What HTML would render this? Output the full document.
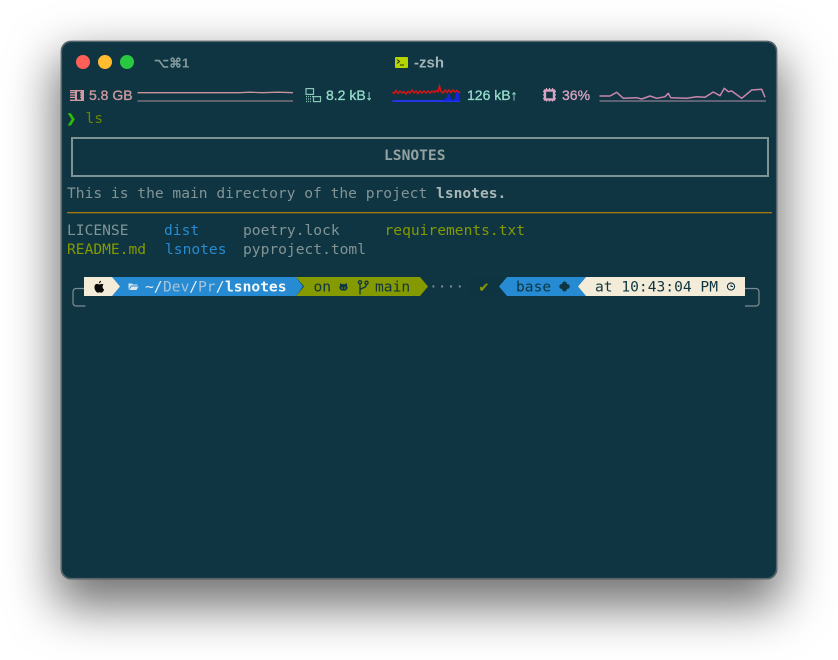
<!DOCTYPE html>
<html>
<head>
<meta charset="utf-8">
<style>
html,body{margin:0;padding:0;background:#fff;width:838px;height:660px;overflow:hidden}
#win{position:absolute;left:61px;top:41px;width:716px;height:538px;border-radius:10px;background:#0e3541;box-shadow:0 22px 48px 6px rgba(0,0,0,.55),0 0 0 .5px rgba(0,0,0,.4)}
svg{position:absolute;left:0;top:0}
.m{font-family:"DejaVu Sans Mono","Liberation Mono",monospace;font-size:14.6px;white-space:pre}
.s{font-family:"Liberation Sans",sans-serif;font-weight:700;font-size:14px}
.t{font-family:"Liberation Sans",sans-serif;font-size:14px;stroke-width:.3px}
</style>
</head>
<body>
<div id="win"></div>
<svg width="838" height="660" viewBox="0 0 838 660" xmlns="http://www.w3.org/2000/svg">
<rect x="61.5" y="41.5" width="715" height="537" rx="10" fill="none" stroke="#56666e" stroke-width="1.2"/>
<!-- traffic lights -->
<circle cx="83" cy="62" r="7" fill="#ff5f57"/>
<circle cx="105" cy="62" r="7" fill="#febc2e"/>
<circle cx="127" cy="62" r="7" fill="#28c840"/>
<text x="154" y="67.5" class="s" fill="#84999d" style="font-size:13px">⌥⌘1</text>
<!-- title -->
<rect x="395" y="57" width="13" height="11" rx="1" fill="#b7d300"/>
<path d="M397 59.5l2.5 2-2.5 2M400 65h4" stroke="#22330a" stroke-width="1" fill="none"/>
<text x="414" y="67.5" class="s" fill="#a2b2b5" style="font-size:15px">-zsh</text>

<!-- memory -->
<g fill="#d19a9f">
<rect x="75" y="90" width="2" height="11"/><rect x="81" y="90" width="3" height="11"/>
<rect x="70" y="90" width="14" height="1.4"/><rect x="70" y="99.6" width="14" height="1.4"/>
<path d="M70 92h5v1.200h-5zM70 94.400h5v1.200h-5zM70 96.800h5v1.200h-5zM80 92h4v1.200h-4zM80 94.400h4v1.200h-4zM80 96.800h4v1.200h-4z"/>
</g>
<text x="89" y="100" class="t" fill="#d19a9f" stroke="#d19a9f">5.8 GB</text>
<path d="M137.500 92.700H240L250 92.200L262 92.700L278 92.200L293 92.700" stroke="#c69499" stroke-width="1.300" fill="none"/>
<path d="M137.500 101H293" stroke="#8f7d85" stroke-width="1.300"/>

<!-- network -->
<g fill="none" stroke="#8ac6b8" stroke-width="1.200">
<rect x="306" y="88.600" width="7.500" height="5.800"/>
<rect x="313.500" y="96.600" width="7" height="5"/>
<path d="M306 96.500h7M306 99h6M306 101.500h6" stroke-dasharray="1 1"/>
</g>
<text x="326" y="100" class="t" fill="#97dccb" stroke="#97dccb">8.2 kB↓</text>
<path d="M392.500 101H460" stroke="#2336e8" stroke-width="2"/>
<path d="M442 101L444 100L447 98L449 94L451 100L453 101M453 101L455 99L456.500 93L458 92L459 97L460 101" fill="#1426e0" stroke="#1426e0" stroke-width=".8"/>
<path d="M392.500 92L394 93.500L396 90.500L398 93.500L400 91L402 93L404 91.500L406 94L408 91.500L410 93L412 90L414 93L416 91L418 93.500L420 91L422 93L424 91L426 93L428 91L430 93L432 91L434 92.500L436 90.500L438 92L439.500 86L441 91.500L443 93L445 90L447 92.500L449 90L451 92.500L453 90L455 92L457 90.500L460 93" fill="none" stroke="#d81414" stroke-width="1.500"/>
<text x="467" y="100" class="t" fill="#97dccb" stroke="#97dccb">126 kB↑</text>

<!-- cpu -->
<g fill="none" stroke="#d9a3c4">
<rect x="545" y="90.500" width="9" height="9" stroke-width="2.400"/>
<path d="M546.500 88v14M549.500 88v14M552.500 88v14M543 91.500h13M543 95h13M543 98.500h13" stroke-width="1.200" stroke-dasharray="2 9.500"/>
</g>
<text x="562" y="100" class="t" fill="#d9a3c4" stroke="#d9a3c4">36%</text>
<path d="M599.500 96L610 96L616.700 92.300L623.300 98.300L636.700 97.700L641.700 99L650 96L656.700 98.300L665 96.700L668.300 93.300L670.700 97.700L686.700 98.300L696.700 96.700L705 97.300L713.300 92L720 95.700L724.300 88.300L728.300 91.700L731.700 91L741.700 98.300L751.700 90L761.700 89.300L765 97.300" fill="none" stroke="#c886ac" stroke-width="1.500" stroke-linejoin="round"/>
<path d="M599.500 101H766" stroke="#8f7d8f" stroke-width="1.300"/>

<!-- ls -->
<text x="66.500" y="124" class="m" font-weight="700" fill="#2cc000" stroke="#2cc000" stroke-width=".5" style="font-size:16px">❯</text>
<text x="85.500" y="123" class="m" fill="#6f8600">ls</text>

<!-- box -->
<rect x="72" y="138" width="696" height="38" fill="none" stroke="#7e9396" stroke-width="2"/>
<text x="384" y="160" class="m" font-weight="700" fill="#93a1a1">LSNOTES</text>

<text x="67" y="198" class="m" fill="#839496">This is the main directory of the project <tspan font-weight="700" fill="#a9b7b7">lsnotes.</tspan></text>
<rect x="67" y="212" width="705" height="1.300" fill="#a5790c"/>

<text x="67" y="235" class="m" fill="#839496">LICENSE</text>
<text x="164" y="235" class="m" fill="#268bd2">dist</text>
<text x="243" y="235" class="m" fill="#839496">poetry.lock</text>
<text x="384.500" y="235" class="m" fill="#859900">requirements.txt</text>
<text x="67" y="254" class="m" fill="#859900">README.md</text>
<text x="165" y="254" class="m" fill="#268bd2">lsnotes</text>
<text x="243" y="254" class="m" fill="#839496">pyproject.toml</text>

<!-- prompt brackets -->
<path d="M84 288.500H76.500Q73 288.500 73 292V302.500Q73 306 76.500 306H85.500" fill="none" stroke="#7b8d92" stroke-width="1.200"/>
<path d="M745 288.500H755.500Q759 288.500 759 292V302.500Q759 306 755.500 306H745" fill="none" stroke="#7b8d92" stroke-width="1.200"/>

<!-- prompt left -->
<path d="M84 277H296L303 286.500L296 296H84Z" fill="#268bd2"/>
<path d="M84 277H112L120 286.500L112 296H84Z" fill="#f3ecd8"/>
<path d="M296 277H420L428 286.500L420 296H296L304 286.500Z" fill="#859900"/>
<path d="M103.500 284.500c-1-.8-2.200-.8-3.200-.3-.6.3-1.100.3-1.700 0-1-.5-2.400-.5-3.200.3-1.400 1.400-1.100 4.300.2 6.400.8 1.300 1.700 2.100 2.700 1.700.9-.3 1.600-.3 2.500 0 1.100.4 1.900-.4 2.700-1.700.3-.5.500-.9.700-1.400-2-.9-2-3.700-.7-5zM98.800 283.400c0-1.300 1-2.400 2.200-2.600.1 1.400-1 2.500-2.200 2.600z" fill="#0a0a0a"/>
<path d="M128.500 283.500h3.500l1 1h4.500v1h-6.500l-2.500 4zM131.500 286.500h7l-2 3.500h-7.500z" fill="#d9e6ee"/>
<text x="145" y="291.500" class="m" fill="#e8eef0">~/</text><text x="163" y="291.500" class="m" fill="#a6c4da">Dev</text><text x="189.200" y="291.500" class="m" fill="#e8eef0">/</text><text x="198" y="291.500" class="m" fill="#a6c4da">Pr</text><text x="215.800" y="291.500" class="m" fill="#e8eef0">/</text><text x="225" y="291.500" class="m" font-weight="700" fill="#f4f7f7">lsnotes</text>
<text x="313.500" y="291.500" class="m" fill="#0e3541">on</text>
<path d="M340 283l1.800 1.100h3.400L347 283v3c.8.900.8 2.300 0 3.300l-1.200 1.200h-4.600L340 289.300c-.8-1-.8-2.400 0-3.300z" fill="#0e3541"/>
<circle cx="342" cy="288" r=".8" fill="#859900"/><circle cx="345" cy="288" r=".8" fill="#859900"/>
<g fill="none" stroke="#0e3541" stroke-width="1.300">
<circle cx="360" cy="282.300" r="1.600"/><circle cx="366.500" cy="282.800" r="1.600"/>
<path d="M360 284v10.500M366.500 284.500c0 4-6.500 3-6.500 6"/>
</g>
<text x="375" y="291.500" class="m" fill="#0e3541">main</text>
<text x="429" y="291.500" class="m" fill="#7d9196">····</text>

<!-- prompt right -->
<path d="M470 277H507L499 286.500L507 296H470Z" fill="#0c303b" opacity=".2"/>
<text x="479.500" y="291.500" class="m" fill="#859900" stroke="#859900" stroke-width=".3" style="font-size:14.500px">✔</text>
<path d="M507 277H586L578 286.500L586 296H507L499 286.500Z" fill="#268bd2"/>
<path d="M586 277H745V296H586L578 286.500Z" fill="#f3ecd8"/>
<text x="516" y="291.500" class="m" fill="#0e3541">base</text>
<path d="M564.500 281.500a2.400 2.400 0 0 1 2.400 2.400v.2h.4a2.400 2.400 0 0 1 0 4.800h-.4v.2a2.400 2.400 0 0 1-4.800 0v-.2h-.4a2.400 2.400 0 0 1 0-4.800h.4v-.2a2.400 2.400 0 0 1 2.400-2.400z" fill="#0e3541"/>
<text x="595" y="291.500" class="m" fill="#0e3541">at 10:43:04 PM</text>
<circle cx="731" cy="286.500" r="3.600" fill="none" stroke="#0e3541" stroke-width="1.100"/>
<path d="M731 284.500v2h2" fill="none" stroke="#0e3541" stroke-width=".9"/>
</svg>
</body>
</html>
